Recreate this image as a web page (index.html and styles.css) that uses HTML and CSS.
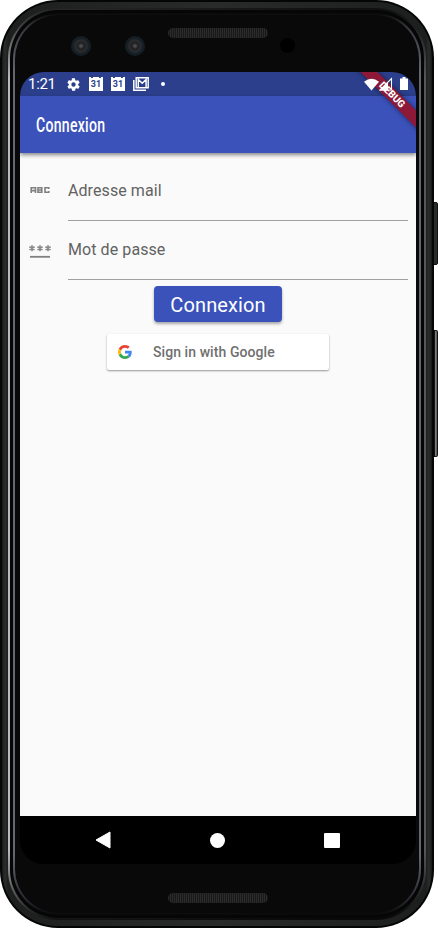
FILE: index.html
```html
<!DOCTYPE html>
<html lang="fr">
<head>
<meta charset="utf-8">
<title>Connexion</title>
<link rel="stylesheet" href="styles.css">
</head>
<body>
<div class="device">
  <span class="side-key power"></span>
  <span class="side-key volume"></span>
  <div class="shell"><div class="rail"><div class="groove"><div class="bezel">
    <div class="glass">
      <div class="forehead">
        <span class="lens first"></span>
        <span class="lens second"></span>
        <span class="speaker top"></span>
        <span class="sensor"></span>
      </div>
      <div class="screen">
        <header class="status">
          <span class="clock">1:21</span>
          <svg class="s-icon gear" viewBox="0 0 24 24"><path fill="#fff" d="M19.4 13c0-.3.1-.6.1-1s0-.7-.1-1l2.100-1.600c.2-.2.3-.4.1-.7l-2-3.400c-.1-.2-.4-.3-.6-.2l-2.500 1c-.5-.4-1.100-.7-1.700-1l-.4-2.600c0-.3-.2-.5-.5-.5h-4c-.3 0-.5.2-.5.5L9.200 5.100c-.6.300-1.200.6-1.700 1l-2.500-1c-.2-.1-.5 0-.6.2l-2 3.400c-.1.300-.1.500.1.7L4.600 11c0 .3-.1.7-.1 1s0 .7.1 1l-2.100 1.600c-.2.200-.2.400-.1.7l2 3.400c.1.200.4.300.6.200l2.500-1c.5.400 1.100.7 1.700 1l.4 2.600c0 .3.200.5.500.5h4c.3 0 .5-.2.5-.5l.4-2.600c.6-.3 1.200-.6 1.700-1l2.500 1c.2.100.5 0 .6-.2l2-3.400c.1-.3.100-.5-.1-.7zM12 15.500a3.500 3.500 0 1 1 0-7 3.500 3.500 0 0 1 0 7z"/></svg>
          <span class="calendar">31</span>
          <span class="calendar">31</span>
          <svg class="mail" viewBox="0 0 16 14"><path d="M.8 3v10.300H13" fill="none" stroke="#fff" stroke-width="1.500"/><path d="M3.200.8h12v9.900h-12zM5.300 10.500V2.500l3.900 3.700 3.900-3.700v8" fill="none" stroke="#fff" stroke-width="1.450"/></svg>
          <span class="dot"></span>
          <svg class="wifi" viewBox="0 0 16 13"><path d="M0 3.500Q8-3 16 3.500L8 13z" fill="#fff"/></svg>
          <svg class="signal" viewBox="0 0 14 14"><path d="M12.500 1.500v11.500H1z" fill="none" stroke="#fff" stroke-width="1.100"/><path d="M0 13.500 9 5v8.500z" fill="#fff"/></svg>
          <svg class="battery" viewBox="0 0 8 14"><path d="M2.500 0h3v1.500H8V13H0V1.500h2.500z" fill="#fff"/></svg>
        </header>
        <div class="debug">DEBUG</div>
        <div class="appbar"><h1>Connexion</h1></div>
        <main class="form">
          <label class="field">
            <svg class="f-icon" viewBox="0 0 24 24"><path d="M3.200 15V9.800H7.500V15M3.200 12.600H7.500M10 9.800h3.800v4.500H10zM10 12h4.300M20.800 10.900V9.800H17v4.500h3.800v-1.200" fill="none" stroke="#808080" stroke-width="1.600"/></svg>
            <span class="input">Adresse mail</span>
          </label>
          <label class="field second-field">
            <svg class="f-icon" viewBox="0 0 24 24"><path d="M2 18.800h20" stroke="#808080" stroke-width="1.800"/><path d="M4 7.200v6M1.400 8.700l5.200 3M1.400 11.700l5.200-3M12 7.200v6M9.400 8.700l5.200 3M9.400 11.700l5.200-3M20 7.200v6M17.400 8.700l5.200 3M17.400 11.700l5.200-3" stroke="#888" stroke-width="1.600"/></svg>
            <span class="input">Mot de passe</span>
          </label>
          <button class="login">Connexion</button>
          <button class="google">
            <svg class="g-logo" viewBox="0 0 48 48"><path fill="#EA4335" d="M24 9.500c3.540 0 6.710 1.220 9.210 3.600l6.850-6.850C35.900 2.380 30.470 0 24 0 14.620 0 6.510 5.380 2.560 13.220l7.980 6.190C12.430 13.720 17.740 9.500 24 9.500z"/><path fill="#4285F4" d="M46.980 24.550c0-1.570-.15-3.090-.38-4.550H24v9.020h12.940c-.58 2.960-2.260 5.480-4.780 7.180l7.730 6c4.510-4.180 7.090-10.360 7.090-17.650z"/><path fill="#FBBC05" d="M10.530 28.590A14.500 14.500 0 0 1 10.530 19.410l-7.980-6.190a24 24 0 0 0 0 21.560z"/><path fill="#34A853" d="M24 48c6.480 0 11.930-2.130 15.890-5.810l-7.730-6c-2.150 1.450-4.920 2.300-8.160 2.300-6.260 0-11.570-4.220-13.470-9.910l-7.980 6.190C6.510 42.620 14.620 48 24 48z"/></svg>
            <span>Sign in with Google</span>
          </button>
        </main>
        <nav class="navbar">
          <svg viewBox="0 0 16 18"><path d="M15 1v16L1 9z" fill="#fff" stroke="#fff" stroke-linejoin="round"/></svg>
          <span class="home"></span>
          <span class="recent"></span>
        </nav>
      </div>
      <div class="chin"><span class="speaker"></span></div>
    </div>
  </div></div></div></div>
</div>
</body>
</html>
```
FILE: styles.css
```css
* { box-sizing: border-box; }
body { margin: 0; background: #fff; font-family: Roboto, sans-serif; overflow: hidden; }
.device { position: relative; width: 438px; height: 929px; padding: 0 4px 1px 0; }
.side-key { position: absolute; right: 0; width: 5px; background: #2a2b2b; border: 1px solid #111; border-radius: 0 2px 2px 0; }
.power { top: 202px; height: 63px; }
.volume { top: 330px; height: 127px; border-left: 2px solid #111; background: linear-gradient(90deg, #888, #555); }
.shell { position: relative; width: 434px; height: 928px; padding: 2px; background: #050505; border-radius: 58px; }
.rail { height: 100%; padding: 6px; background: linear-gradient(90deg, #171717, #2b2d2d 3px, #1d1f1f 6px, #292b2b 50%, #1d1f1f calc(100% - 6px), #2b2d2d calc(100% - 3px), #171717); border-radius: 56px; }
.groove { height: 100%; padding: 2px; background: linear-gradient(90deg, transparent 20%, #0008 80%), linear-gradient(#222, #444 20px, #bbb 70px, #bbb calc(100% - 70px), #444 calc(100% - 20px), #111); border-radius: 50px; }
.bezel { height: 100%; padding: 3px; background: #060606; border-radius: 48px; }
.glass { height: 100%; border-radius: 46px; border: 2px solid transparent; background: linear-gradient(#090909, #090909) padding-box, linear-gradient(#090909, #33333a 12px, #66666f 60px, #66666f calc(100% - 60px), #22222a calc(100% - 12px), #090909) border-box; }
.forehead { position: relative; height: 57px; }
.lens { position: absolute; top: 21px; width: 20px; height: 20px; border-radius: 50%; background: radial-gradient(circle, #4c4c50 0 1px, #202023 3px, #2a2c2e 6px, #131e25 8px); }
.first { left: 56px; }
.second { left: 110px; }
.sensor { position: absolute; left: 265px; top: 23px; width: 15px; height: 15px; border-radius: 50%; background: #000; }
.speaker { display: block; width: 100px; height: 10px; border-radius: 5px; background: repeating-linear-gradient(90deg, #2b2b2b 0 1px, #191919 1px 2px); }
.speaker.top { position: absolute; left: 153px; top: 13px; }
.screen { position: relative; height: 792px; width: 396px; margin-left: 5px; border-radius: 24px; overflow: hidden; display: flex; flex-direction: column; background: #000; }
.status { height: 24px; flex: none; background: #2b3f8d; display: flex; align-items: center; padding-left: 8px; color: #fff; }
.clock { font-size: 15px; width: 38px; letter-spacing: -.3px; }
.gear { width: 15px; height: 15px; }
.calendar { width: 14px; height: 14px; margin-left: 8px; background: radial-gradient(circle at 3px 0, #2b3f8d .7px, transparent 1.3px), radial-gradient(circle at 11px 0, #2b3f8d .7px, transparent 1.3px), #fff; color: #2b3f8d; font-size: 9px; line-height: 15px; font-weight: 700; text-align: center; }
.mail { width: 16px; height: 14px; margin-left: 8px; }
.dot { width: 4px; height: 4px; border-radius: 50%; background: #fff; margin-left: 12px; }
.wifi { width: 15px; height: 13px; margin-left: auto; z-index: 2; }
.signal { width: 14px; height: 14px; margin: 0 7px 0 0; z-index: 2; }
.battery { width: 8px; height: 14px; margin-right: 8px; z-index: 2; }
.debug { position: absolute; z-index: 1; width: 120px; height: 12px; right: -36px; top: 17px; transform: rotate(45deg); background: #8d1838; color: #fff; font-size: 10px; line-height: 12px; font-weight: 800; text-align: center; box-shadow: 0 0 5px #0008; }
.appbar { height: 57px; flex: none; background: #3b52ba; padding: 0 16px; display: flex; align-items: center; box-shadow: 0 2px 4px #0007; z-index: 0; }
h1 { margin: 0; color: #fff; font-size: 21px; font-weight: 500; letter-spacing: .4px; transform: scaleX(.67); transform-origin: left; }
.form { flex: 1; display: flex; flex-direction: column; align-items: center; padding: 8px 8px 0; background: #fafafa; }
.field { width: 380px; height: 60px; display: flex; align-items: flex-start; flex: none; }
.f-icon { width: 24px; height: 24px; margin: 17px 16px 0 0; }
.input { flex: 1; height: 60px; border-bottom: 1px solid #a0a0a0; color: #626262; font-size: 16px; line-height: 59px; letter-spacing: .08px; }
.second-field, .second-field .input { height: 59px; }
.second-field .input { line-height: 58px; }
.login { width: 128px; height: 36px; margin-top: 6px; border: 0; padding: 1px 0 0; border-radius: 4px; background: #3b52ba; color: #fff; font: 400 20px Roboto, sans-serif; letter-spacing: .1px; box-shadow: 0 2px 3px #0005; flex: none; }
.google { width: 222px; height: 36px; margin-top: 12px; border: 0; border-radius: 2px; padding: 0 0 0 11px; background: #fff; color: #707070; display: flex; align-items: center; gap: 21px; font: 500 14px/16px Roboto, sans-serif; letter-spacing: .07px; box-shadow: 0 1px 2px #0006; flex: none; }
.g-logo { width: 14px; height: 14px; }
.navbar { height: 48px; background: #000; display: flex; align-items: center; padding-left: 75px; flex: none; }
.navbar svg { width: 16px; height: 18px; }
.home { width: 15px; height: 15px; border-radius: 50%; background: #fff; margin-left: 99px; }
.recent { width: 16px; height: 15px; border-radius: 1px; background: #fff; margin-left: 99px; }
.chin { padding: 29px 0 0 153px; }
```
